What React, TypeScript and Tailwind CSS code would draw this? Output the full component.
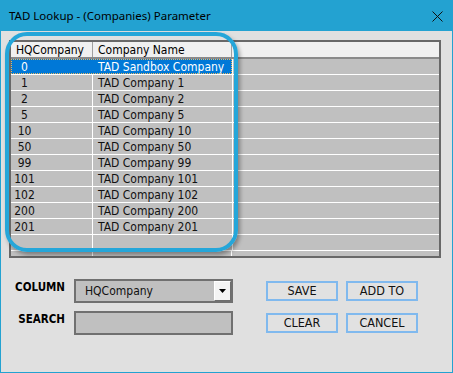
import React from "react";

const rows: [string, string][] = [
  ["0", "TAD Sandbox Company"],
  ["1", "TAD Company 1"],
  ["2", "TAD Company 2"],
  ["5", "TAD Company 5"],
  ["10", "TAD Company 10"],
  ["50", "TAD Company 50"],
  ["99", "TAD Company 99"],
  ["101", "TAD Company 101"],
  ["102", "TAD Company 102"],
  ["200", "TAD Company 200"],
  ["201", "TAD Company 201"],
  ["", ""],
];

const TAHOMA = "Tahoma, 'DejaVu Sans Condensed', 'DejaVu Sans', sans-serif";

function Btn({ label }: { label: string }) {
  return (
    <div className="w-[72px] h-[20px] border-2 border-[#80b9ee] bg-[#e1e1e1] flex items-center justify-center text-[12.5px] text-[#111] leading-none">
      {label}
    </div>
  );
}

export default function App() {
  return (
    <div className="w-[453px] h-[373px] flex flex-col bg-[#e0e0e0] overflow-hidden" style={{ fontFamily: TAHOMA }}>
      <div className="h-[31px] shrink-0 bg-[#23a2d1] flex items-center justify-between pl-[9px] pr-[10px]">
        <span className="text-[11.5px] text-black" style={{ fontFamily: "'Segoe UI', 'Noto Sans', sans-serif" }}>
          TAD Lookup - (Companies) Parameter
        </span>
        <svg width="11" height="11" viewBox="0 0 11 11" className="mt-[1px]">
          <path d="M0.5 0.5 L10.5 10.5 M10.5 0.5 L0.5 10.5" stroke="#111" strokeWidth="1" />
        </svg>
      </div>
      <div className="relative flex-1 border-x border-b border-[#23a2d1] pl-[8px] pt-[9px]">
        {/* grid */}
        <div className="w-[432px] h-[218px] border-2 border-[#686868] bg-[#c0c0c0] flex flex-col text-[12px]">
          <div className="h-[17px] shrink-0 flex bg-[#f0f0f0] border-b-2 border-[#8a8a8a] text-black">
            <div className="w-[82px] flex items-center pl-[5px] border-r border-[#a0a0a0]">HQCompany</div>
            <div className="w-[139px] flex items-center pl-[5px] border-r border-[#a0a0a0]">Company Name</div>
            <div className="flex-1" />
          </div>
          {rows.map(([id, name], i) => {
            const sel = i === 0;
            return (
              <div key={i} className="h-[16px] shrink-0 flex border-b border-white">
                <div
                  className={`w-[221px] flex ${sel ? "bg-[#0078d7] text-white outline-1 outline-dotted outline-[#e9b860] -outline-offset-1" : "text-[#111]"}`}
                >
                  <div className={`w-[82px] flex items-center ${sel ? "" : "border-r border-white"}`}>
                    <span className="w-[27px] text-center">{id}</span>
                  </div>
                  <div className="flex-1 flex items-center pl-[5px]">{name}</div>
                </div>
                <div className="flex-1 border-l border-white" />
              </div>
            );
          })}
          <div className="flex-1 flex">
            <div className="w-[82px] border-r border-white" />
            <div className="w-[139px] border-r border-white" />
          </div>
        </div>

        {/* highlight overlay */}
        <div className="absolute left-[4px] top-[1px] w-[233px] h-[220px] border-4 border-[#25a6d9] rounded-[22px] shadow-[2px_3px_4px_rgba(0,0,0,0.35)] pointer-events-none" />

        {/* bottom controls */}
        <div className="flex mt-[21px]">
          <div className="flex flex-col gap-[8px]">
            <div className="flex items-center">
              <div className="w-[56px] text-right text-[11.5px] font-bold text-black pb-[6px]">COLUMN</div>
              <div className="ml-[9px] w-[159px] h-[24px] border-2 border-[#707070] bg-[#c0c0c0] flex items-center justify-between pl-[9px] pr-0">
                <span className="text-[12px] text-[#111]">HQCompany</span>
                <div className="w-[17px] h-[20px] bg-[#f4f4f4] border-r border-b border-[#6d6d6d] border-l border-t border-l-white border-t-white flex items-center justify-center">
                  <svg width="7" height="4" viewBox="0 0 7 4">
                    <path d="M0 0 H7 L3.5 4 Z" fill="#000" />
                  </svg>
                </div>
              </div>
            </div>
            <div className="flex items-center">
              <div className="w-[56px] text-right text-[11.5px] font-bold text-black pb-[6px]">SEARCH</div>
              <div className="ml-[9px] w-[159px] h-[24px] border-2 border-[#707070] bg-[#c0c0c0]" />
            </div>
          </div>
          <div className="ml-[33px] mt-[2px] grid grid-cols-2 gap-x-[8px] gap-y-[12px] h-fit">
            <Btn label="SAVE" />
            <Btn label="ADD TO" />
            <Btn label="CLEAR" />
            <Btn label="CANCEL" />
          </div>
        </div>
      </div>
    </div>
  );
}
